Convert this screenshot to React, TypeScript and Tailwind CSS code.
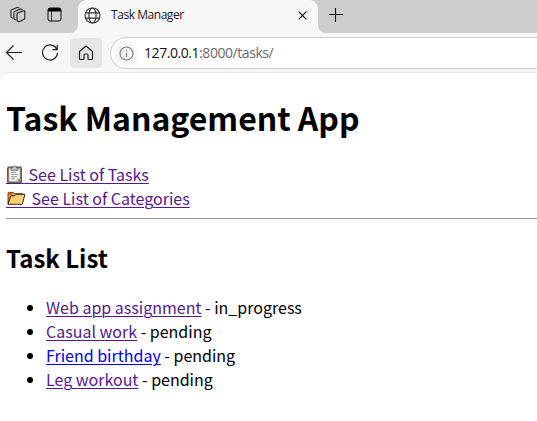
import type { ReactNode } from 'react';

const tasks = [
  { name: 'Web app assignment', status: 'in_progress', visited: true },
  { name: 'Casual work', status: 'pending', visited: true },
  { name: 'Friend birthday', status: 'pending', visited: false },
  { name: 'Leg workout', status: 'pending', visited: true },
];

function Link({ visited = true, children }: { visited?: boolean; children: ReactNode }) {
  return (
    <a href="#" className={`underline decoration-1 underline-offset-2 ${visited ? 'text-[#551a8b]' : 'text-[#0000ee]'}`}>
      {children}
    </a>
  );
}

function Workspaces() {
  return (
    <svg className="h-[18px] w-[18px]" viewBox="0 0 18 18" fill="none" stroke="#222" strokeWidth="1.1" strokeLinejoin="round" strokeLinecap="round">
      <path d="M8 8.2q0-.8.7-1.100l5.900-2.300q1.200-.4 1.200.7v6.700q0 .8-.7 1.100l-4.500 2.300q-.8.4-1.500 0l-.5-.3q-.6-.3-.6-1z" />
      <path d="M6.400 13.800l-.9-.5q-.6-.3-.6-1V6.500q0-.8.7-1.100l5.600-2.300q.7-.3 1.400.2l.6.5" />
      <path d="M3.400 12.100l-.9-.5q-.6-.3-.6-1V4.800q0-.8.7-1.100l5.500-2.300q.7-.3 1.300.2l.5.4" />
    </svg>
  );
}

function TabActions() {
  return (
    <svg className="h-[15px] w-[15px]" viewBox="0 0 15 15" fill="none">
      <rect x="1" y="1" width="13" height="13" rx="2" stroke="#111" />
      <path d="M1 4.500V3a2 2 0 0 1 2-2h9a2 2 0 0 1 2 2v1.500z" fill="#000" />
      <path d="M4.500 4v10" stroke="#333" />
    </svg>
  );
}

function Globe() {
  return (
    <svg className="h-[17px] w-[17px]" viewBox="0 0 17 17" fill="none" stroke="#333" strokeWidth="1.1">
      <circle cx="8.500" cy="8.500" r="7.500" />
      <ellipse cx="8.500" cy="8.500" rx="3.600" ry="7.500" />
      <path d="M1.500 5.900h14M1.500 11.100h14" />
    </svg>
  );
}

function Clipboard() {
  return (
    <svg className="absolute top-[3px] left-0 h-[19px] w-[17px]" viewBox="0 0 17 19">
      <rect x="1.700" y="2" width="13.600" height="16" rx="1" fill="#a58a7c" stroke="#4a3c35" />
      <path d="M3.200 3.600h10.600v9.600l-3 3H3.200z" fill="#f1f1f1" />
      <path d="M13.800 13.200l-3 3v-3z" fill="#b9bdc4" />
      <path d="M5 3h1.800c0-3 3.500-3 3.500 0H12v2.300H5z" fill="#c6c9ce" stroke="#5a5857" strokeWidth=".7" />
      <path d="M5 7.500h5M5 9.500h7M5 11.500h6M5 13.500h4" stroke="#999" strokeWidth=".9" />
    </svg>
  );
}

function Folder() {
  return (
    <svg className="absolute top-[5px] left-0 h-[15px] w-[20px]" viewBox="0 0 20 15">
      <path d="M2 13V2.200q0-.8.8-.8h4.400l1.300 1.300h8.100v3" fill="#e69a20" stroke="#3a2a12" strokeWidth=".8" />
      <path d="M2 13.300L4.800 4.800h3.800l1.500-1.500h8.800l-2.600 10z" fill="#ffd174" stroke="#171008" strokeWidth=".9" strokeLinejoin="round" />
      <path d="M2.400 1.800h3.400v1.800H2.400z" fill="#e94a2c" />
    </svg>
  );
}

export default function App() {
  return (
    <div className="h-[421px] w-[537px] overflow-hidden bg-[#f7f7f7]">
      <header className="font-['Open_Sans',sans-serif]">
        <div className="flex h-[33px] bg-[#f7f7f7]">
          <div className="flex w-[78px] shrink-0 rounded-br-[8px] bg-[#cdcdcd] pt-[6px] pl-[9px]">
            <Workspaces />
            <div className="ml-[20px] pt-[1px]"><TabActions /></div>
          </div>
          <div className="relative flex w-[240px] shrink-0 items-start pt-[7px] pl-[6px] before:absolute before:top-0 before:left-0 before:h-2 before:w-2 before:bg-[radial-gradient(circle_at_100%_100%,transparent_7.5px,#cdcdcd_8px)] after:absolute after:top-0 after:right-0 after:h-2 after:w-2 after:bg-[radial-gradient(circle_at_0_100%,transparent_7.5px,#cdcdcd_8px)]">
            <Globe />
            <span className="ml-[10px] text-[12px] leading-4 tracking-[-0.45px] text-[#1c1c1c]">Task Manager</span>
            <svg className="mt-[4px] mr-[11px] ml-auto h-[9px] w-[9px]" viewBox="0 0 9 9" stroke="#111" strokeWidth="1.2"><path d="M.7.7l7.600 7.600M8.300.7L.7 8.300" /></svg>
          </div>
          <div className="flex-1 rounded-bl-[8px] bg-[#cdcdcd] pt-[8px] pl-[11px]">
            <svg className="h-[14px] w-[14px]" viewBox="0 0 14 14" stroke="#111" strokeWidth="1.1"><path d="M6.500 0v14M0 6.500h14" /></svg>
          </div>
        </div>
        <div className="flex h-[39px] items-start pt-[4px]">
          <svg className="mt-[7px] ml-[5px] h-[17px] w-[18px]" viewBox="0 0 18 17" fill="none" stroke="#222" strokeWidth="1.2"><path d="M8.500 1.500L1.500 8.500l7 7M1.500 8.500H17" /></svg>
          <svg className="mt-[7px] ml-[18px] h-[18px] w-[18px]" viewBox="0 0 18 18" fill="none" stroke="#222" strokeWidth="1.2"><path d="M15.900 5.500A7.500 7.500 0 1 0 16.500 9M16.300 1v4.700h-4.800" /></svg>
          <div className="mt-[1px] ml-[11px] flex h-[30px] w-[32px] items-center justify-center rounded-[4px] bg-[#e6e6e6]">
            <svg className="h-[16px] w-[16px]" viewBox="0 0 16 16" fill="none" stroke="#222" strokeWidth="1.2" strokeLinejoin="round"><path d="M1.500 6.500L8 1l6.500 5.500v7q0 1-1 1H11q-1 0-1-1V10q0-1-1-1H7q-1 0-1 1v3.500q0 1-1 1H2.500q-1 0-1-1z" /></svg>
          </div>
          <div className="ml-[8px] flex h-[32px] flex-1 items-center rounded-l-full border border-r-0 border-[#cfcfcf] bg-white pl-[3px]">
            <div className="flex h-[24px] w-[24px] items-center justify-center rounded-full bg-[#f5f5f5]">
              <svg className="h-[15px] w-[15px]" viewBox="0 0 15 15" fill="none" stroke="#777" strokeWidth="1.1"><circle cx="7.500" cy="7.500" r="6.500" /><path d="M7.500 6.500V11M7.500 4v1.200" /></svg>
            </div>
            <span className="relative -top-px ml-[6px] text-[14px] tracking-[-0.44px] text-[#111]">127.0.0.1<span className="text-[#6b6b6b]">:8000/tasks/</span></span>
          </div>
        </div>
      </header>
      <main className="h-[349px] rounded-tl-[8px] border-t border-[#e8e8e8] bg-white pl-[6px] font-['Noto_Sans_CJK_JP',sans-serif] text-[16px] leading-6 text-black">
        <h1 className="pt-[20px] text-[32px] leading-[48px] font-bold tracking-[-0.03px]">Task Management App</h1>
        <nav className="mt-[21px]">
          <div className="relative h-6"><Link><span className="tracking-[15.4px]">{'\u00a0'}</span> See List of Tasks</Link><Clipboard /></div>
          <div className="relative h-6"><Link><span className="tracking-[18.4px]">{'\u00a0'}</span> See List of Categories</Link><Folder /></div>
        </nav>
        <hr className="mt-[8px] border-t border-[#999]" />
        <h2 className="mt-[21px] text-[24px] leading-[36px] font-bold">Task List</h2>
        <ul className="mt-[19px] list-disc pl-[40px]">
          {tasks.map((task) => (
            <li key={task.name}><Link visited={task.visited}>{task.name}</Link> - {task.status}</li>
          ))}
        </ul>
      </main>
    </div>
  );
}
